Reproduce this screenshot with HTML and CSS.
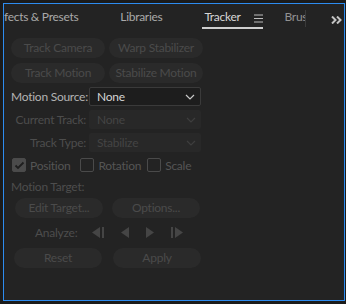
FILE: index.html
```html
<!DOCTYPE html>
<html lang="en">
<head>
    <meta charset="UTF-8">
    <title>Tracker</title>
    <link rel="stylesheet" href="styles.css">
</head>
<body>
    <div class="panel">
        <!-- Onglets -->
        <div class="tabs">
            <div class="tab-strip">
                <span class="tab first">fects &amp; Presets</span>
                <span class="tab">Libraries</span>
                <span class="tab active">Tracker <svg class="menu" width="9" height="9" viewBox="0 0 9 9"><path d="M0 1 H9 M0 4.5 H9 M0 8 H9" stroke="#bdbdbd" stroke-width="1"/></svg></span>
                <span class="tab last">Brus</span>
            </div>
            <span class="divider"></span>
            <span class="more">
                <svg width="11" height="8" viewBox="0 0 11 8"><path d="M1 0.5 L4.5 4 L1 7.5 M6 0.5 L9.5 4 L6 7.5" fill="none" stroke="#c4c4c4" stroke-width="2"/></svg>
            </span>
        </div>

        <div class="content">
            <div class="btn-row">
                <span class="btn">Track Camera</span>
                <span class="btn">Warp Stabilizer</span>
            </div>
            <div class="btn-row second">
                <span class="btn">Track Motion</span>
                <span class="btn">Stabilize Motion</span>
            </div>

            <div class="field">
                <span class="label on">Motion Source:</span>
                <span class="select on">None <span class="chevron"><svg width="10" height="6" viewBox="0 0 10 6"><path d="M1 1 L5 5 L9 1" fill="none" stroke="#c8c8c8" stroke-width="1.2"/></svg></span></span>
            </div>
            <div class="field">
                <span class="label">Current Track:</span>
                <span class="select">None <span class="chevron"><svg width="10" height="6" viewBox="0 0 10 6"><path d="M1 1 L5 5 L9 1" fill="none" stroke="#3e3e3e" stroke-width="1.2"/></svg></span></span>
            </div>
            <div class="field">
                <span class="label">Track Type:</span>
                <span class="select">Stabilize <span class="chevron"><svg width="10" height="6" viewBox="0 0 10 6"><path d="M1 1 L5 5 L9 1" fill="none" stroke="#3e3e3e" stroke-width="1.2"/></svg></span></span>
            </div>

            <div class="checks">
                <span class="check pos"><span class="box checked"><svg width="11" height="9" viewBox="0 0 11 9"><path d="M1.5 4.5 L4 7 L9.5 1.5" fill="none" stroke="#1e1e1e" stroke-width="1.8"/></svg></span>Position</span>
                <span class="check rot"><span class="box"></span>Rotation</span>
                <span class="check"><span class="box"></span>Scale</span>
            </div>

            <div class="target-label">Motion Target:</div>
            <div class="btn-row target">
                <span class="btn">Edit Target...</span>
                <span class="btn">Options...</span>
            </div>

            <div class="analyze">
                <span class="analyze-label">Analyze:</span>
                <span class="ctrl"><svg width="12" height="11" viewBox="0 0 12 11"><path d="M0 5.5 L8 0 L8 11 Z" fill="#454545"/><rect x="10" y="0" width="2" height="11" fill="#454545"/></svg></span>
                <span class="ctrl"><svg width="8" height="11" viewBox="0 0 8 11"><path d="M0 5.5 L8 0 L8 11 Z" fill="#454545"/></svg></span>
                <span class="ctrl"><svg width="8" height="11" viewBox="0 0 8 11"><path d="M8 5.5 L0 0 L0 11 Z" fill="#454545"/></svg></span>
                <span class="ctrl"><svg width="12" height="11" viewBox="0 0 12 11"><rect x="0" y="0" width="2" height="11" fill="#454545"/><path d="M12 5.5 L4 0 L4 11 Z" fill="#454545"/></svg></span>
            </div>

            <div class="btn-row final">
                <span class="btn">Reset</span>
                <span class="btn">Apply</span>
            </div>
        </div>
    </div>
</body>
</html>
```

FILE: styles.css
```css
/* Général */
body {
    margin: 0;
    padding: 3px 1px 3px 3px;
    background: #1b1b1b;
    font-family: 'Lato', 'Liberation Sans', sans-serif;
    font-size: 12px;
    letter-spacing: -0.25px;
}

.panel {
    width: 342px;
    height: 298px;
    box-sizing: border-box;
    border: 1px solid #2d8cf0;
    background: #232323;
    overflow: hidden;
}

/* Onglets */
.tabs {
    display: flex;
    height: 25px;
}

.tab-strip {
    display: flex;
    width: 301px;
    overflow: hidden;
    white-space: nowrap;
}

.tab {
    display: flex;
    align-items: flex-start;
    height: 25px;
    box-sizing: border-box;
    padding-top: 5px;
    border-bottom: 2px solid transparent;
    color: #a9a9a9;
    font-size: 12px;
    letter-spacing: -0.3px;
    flex-shrink: 0;
}

.tab:nth-child(2) {
    margin-left: 42px;
}

.tab.active {
    margin-left: 40px;
    padding-left: 2px;
    color: #d6d6d6;
    border-bottom-color: #cfcfcf;
}

.tab .menu {
    margin-left: 13px;
    margin-top: 5px;
}

.tab.last {
    margin-left: 22px;
    color: #929292;
}

.divider {
    width: 1px;
    height: 17px;
    margin-top: 6px;
    background: #3a3a3a;
}

.more {
    margin-left: 25px;
    padding-top: 8px;
}

/* Contenu */
.content {
    padding: 9px 0 0 7px;
    color: #4a4a4a;
    white-space: nowrap;
}

.btn-row {
    display: flex;
    gap: 4px;
}

.btn-row.second {
    margin-top: 5px;
}

.btn {
    width: 94px;
    height: 20px;
    line-height: 20px;
    border-radius: 10px;
    background: #2a2a2a;
    color: #4b4b4b;
    text-align: center;
}

.field {
    display: flex;
    align-items: center;
    margin-top: 4px;
    height: 19px;
}

.label {
    width: 75px;
    text-align: right;
    margin-right: 3px;
    color: #4d4d4d;
}

.label.on {
    color: #b3b3b3;
}

.select {
    display: flex;
    align-items: center;
    width: 112px;
    height: 19px;
    box-sizing: border-box;
    padding-left: 8px;
    border-radius: 2px;
    background: #282828;
    color: #444;
}

.select.on {
    background: #1d1d1d;
    border: 1px solid #3a3a3a;
    padding-left: 7px;
    color: #d4d4d4;
}

.chevron {
    margin-left: auto;
    margin-right: 5px;
    display: flex;
}

/* Cases à cocher */
.checks {
    display: flex;
    align-items: center;
    margin-top: 6px;
    height: 14px;
    padding-left: 1px;
    color: #555;
}

.check {
    display: flex;
    align-items: center;
}

.check.pos {
    margin-right: 10px;
}

.check.rot {
    margin-right: 6px;
}

.box {
    width: 14px;
    height: 14px;
    box-sizing: border-box;
    border: 1px solid #4a4a4a;
    border-radius: 2px;
    margin-right: 4px;
    display: flex;
    align-items: center;
    justify-content: center;
}

.box.checked {
    background: #4b4b4b;
}

.target-label {
    margin-top: 7px;
    height: 16px;
    line-height: 16px;
    color: #4d4d4d;
}

.btn-row.target {
    margin-top: 3px;
    padding-left: 4px;
    gap: 9px;
}

.btn-row.target .btn {
    width: 88px;
}

.analyze {
    display: flex;
    align-items: center;
    height: 20px;
    margin-top: 4px;
    padding-left: 24px;
}

.analyze-label {
    color: #4d4d4d;
    margin-right: 15px;
}

.ctrl {
    display: flex;
    margin-right: 17px;
}

.btn-row.final {
    margin-top: 6px;
    padding-left: 3px;
    gap: 11px;
}

.btn-row.final .btn {
    width: 88px;
}
```
